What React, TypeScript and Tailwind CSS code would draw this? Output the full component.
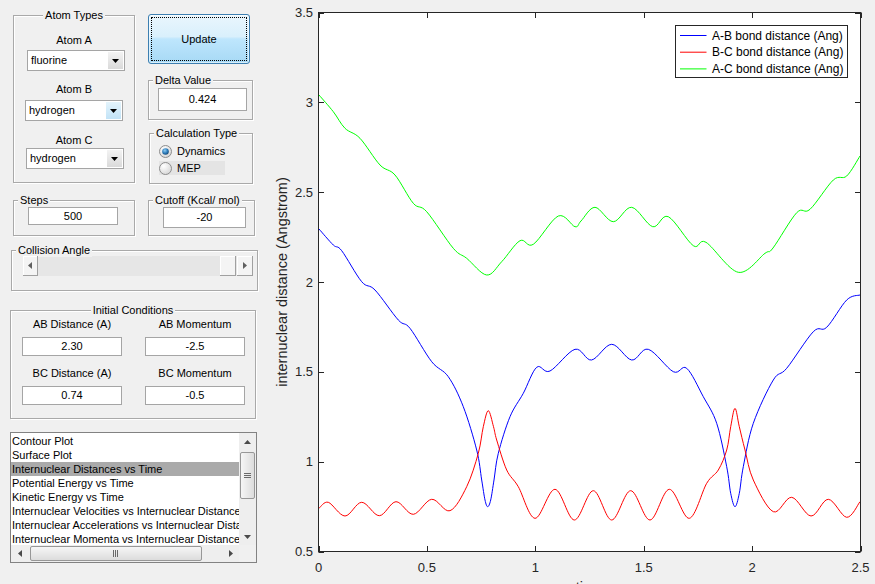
import type { ReactNode } from 'react'

// MATLAB-style GUI: control column on the left, internuclear distance plot on the right

const ETCH = 'border border-[#a9a9a9] shadow-[inset_1px_1px_0_#ffffff,1px_1px_0_#ffffff]'

type Pt = [number, number]

// plot box in page pixels
const L = 318.5
const R = 860.5
const T = 12.5
const B = 551.5
const xs = (t: number) => L + (t * (R - L)) / 2.5
const ys = (v: number) => T + ((3.5 - v) * (B - T)) / 3

const GREEN: Pt[] = [
  [319, 95], [333.3, 111.7], [345, 128.3], [360, 138.3], [380, 165], [395, 175], [413.3, 203.3],
  [426.7, 211.7], [453.3, 248.3], [466.7, 258.3], [486.7, 275], [501.7, 261.7], [520, 240.7],
  [533.3, 244.3], [558.3, 216], [575, 226.7], [581, 221], [595, 207.3], [613.3, 221.7], [631.7, 207.3],
  [652.7, 226.7], [668.3, 216.7], [693.3, 245.7], [706, 242.3], [738.3, 272.3], [765, 253.3],
  [773, 248], [796.7, 212.7], [810, 209.3], [833.3, 180], [846.7, 176], [860, 156],
]

const BLUE: Pt[] = [
  [319, 229], [333.3, 245], [341.7, 250.7], [361.7, 281.7], [375, 290], [398.3, 320], [410, 328.3],
  [431.7, 361.7], [448.3, 376.7], [463.3, 406.7], [476.7, 450], [481.7, 480], [485, 500],
  [487.7, 506.7], [490.7, 500], [494, 480], [498.3, 453.3], [510, 416.7], [523.3, 393.3],
  [536.7, 367.3], [550, 371], [575, 349.3], [591.5, 360], [611.7, 344.3], [631.7, 360],
  [648.3, 349.3], [673.3, 371.7], [686.7, 368.3], [703.3, 396.7], [716.7, 423.3], [726.7, 466.7],
  [730.7, 493.3], [735, 506.7], [739.3, 493.3], [743.3, 466.7], [753.3, 423.3], [773.3, 380],
  [786.7, 368.3], [813.3, 331.7], [826.7, 327.3], [846.7, 300], [860, 295],
]

const RED: Pt[] = [
  [319, 508.3], [328.3, 502.3], [345, 516], [361.7, 502.3], [379.3, 515.7], [396, 501.7],
  [413.3, 514.3], [431.7, 499.3], [450, 510.7], [466.7, 486.7], [478.3, 453.3], [483.3, 426.7],
  [488.3, 410.7], [493.5, 426.7], [496.7, 440], [506.7, 470], [518.3, 486.7], [535, 518.3],
  [555, 489.3], [574.3, 520], [593.3, 490.7], [611.7, 520], [630.7, 490.7], [650, 520],
  [669.3, 489.3], [689.3, 518.3], [706.7, 483.3], [718.3, 470], [726.7, 450], [730.7, 426.7],
  [735, 408.3], [739.3, 426.7], [745, 450], [753.3, 480], [773.3, 511.7], [791.7, 497.3],
  [811, 516], [828.3, 499.3], [846.7, 517.3], [860, 501.7],
]

function smooth(pts: Pt[]): string {
  let d = `M${pts[0][0]},${pts[0][1]}`
  for (let i = 0; i < pts.length - 1; i++) {
    const p0 = pts[i - 1] ?? pts[i]
    const p1 = pts[i]
    const p2 = pts[i + 1]
    const p3 = pts[i + 2] ?? p2
    const c1x = p1[0] + (p2[0] - p0[0]) / 6
    const c1y = p1[1] + (p2[1] - p0[1]) / 6
    const c2x = p2[0] - (p3[0] - p1[0]) / 6
    const c2y = p2[1] - (p3[1] - p1[1]) / 6
    d += ` C${c1x.toFixed(2)},${c1y.toFixed(2)} ${c2x.toFixed(2)},${c2y.toFixed(2)} ${p2[0]},${p2[1]}`
  }
  return d
}

function Panel({
  title,
  center,
  className,
  children,
}: {
  title: string
  center?: boolean
  className: string
  children?: ReactNode
}) {
  return (
    <div className={`${ETCH} ${className}`}>
      <div className={`-mt-[7px] flex h-[13px] ${center ? 'justify-center' : 'pl-[4px]'}`}>
        <span className="bg-[#f0f0f0] px-[2px] leading-[13px]">{title}</span>
      </div>
      {children}
    </div>
  )
}

function Edit({ value, className }: { value: string; className: string }) {
  return (
    <div className={`flex items-center justify-center border border-[#a5a5a5] bg-white ${className}`}>
      {value}
    </div>
  )
}

function Popup({ value, hot, className }: { value: string; hot?: boolean; className: string }) {
  return (
    <div className={`flex h-[21px] w-[98px] border border-[#a5a5a5] bg-white ${className}`}>
      <span className="flex-1 pl-[3px] leading-[19px]">{value}</span>
      <span
        className={`m-[1px] flex w-[15px] items-center justify-center ${
          hot
            ? 'bg-[linear-gradient(#e4f4fc,#c2e3f7)]'
            : 'bg-[linear-gradient(#f3f3f3,#dadada)]'
        }`}
      >
        <svg width="7" height="4" viewBox="0 0 7 4">
          <path d="M0 0h7L3.5 4z" fill="#000" />
        </svg>
      </span>
    </div>
  )
}

function Radio({ on }: { on?: boolean }) {
  return (
    <svg width="13" height="13" viewBox="0 0 13 13" className="shrink-0">
      <defs>
        <radialGradient id={on ? 'rOn' : 'rOff'} cx="0.35" cy="0.3" r="0.8">
          <stop offset="0" stopColor="#ffffff" />
          <stop offset="1" stopColor="#d4d4d4" />
        </radialGradient>
        <radialGradient id="rDot" cx="0.4" cy="0.35" r="0.7">
          <stop offset="0" stopColor="#8fcdf3" />
          <stop offset="0.6" stopColor="#2a79b8" />
          <stop offset="1" stopColor="#17466e" />
        </radialGradient>
      </defs>
      <circle cx="6.5" cy="6.5" r="6" fill={on ? 'url(#rOn)' : 'url(#rOff)'} stroke="#8d8d8d" />
      {on && <circle cx="6.5" cy="6.5" r="3.3" fill="url(#rDot)" />}
    </svg>
  )
}

function Tri({ dir, color = '#4a4a4a' }: { dir: 'up' | 'down' | 'left' | 'right'; color?: string }) {
  const d = {
    up: 'M0 4h7L3.5 0z',
    down: 'M0 0h7L3.5 4z',
    left: 'M4 0v7L0 3.5z',
    right: 'M0 0v7L4 3.5z',
  }[dir]
  const vertical = dir === 'up' || dir === 'down'
  return (
    <svg width={vertical ? 7 : 4} height={vertical ? 4 : 7} viewBox={vertical ? '0 0 7 4' : '0 0 4 7'}>
      <path d={d} fill={color} />
    </svg>
  )
}

function Slider() {
  const btn = 'flex items-center justify-center bg-[#f4f4f4] border-r border-b border-[#a0a0a0] shadow-[inset_1px_1px_0_#ffffff]'
  return (
    <div className="-mt-[1px] ml-[11px] flex h-[20px] w-[230px] bg-[#e6e6e6]">
      <div className={`w-[15px] ${btn}`}>
        <Tri dir="left" color="#606060" />
      </div>
      <div className="flex-1" />
      <div className={`w-[16px] ${btn}`} />
      <div className={`ml-[1px] w-[16px] ${btn}`}>
        <Tri dir="right" color="#606060" />
      </div>
    </div>
  )
}

const PLOTS = [
  'Contour Plot',
  'Surface Plot',
  'Internuclear Distances vs Time',
  'Potential Energy vs Time',
  'Kinetic Energy vs Time',
  'Internuclear Velocities vs Internuclear Distance',
  'Internuclear Accelerations vs Internuclear Distance',
  'Internuclear Momenta vs Internuclear Distance',
]

function ListBox() {
  const thumb = 'rounded-[2px] border border-[#979797] flex items-center justify-center'
  return (
    <div className="ml-[10px] mt-[13px] flex h-[131px] w-[247px] flex-col border border-[#828282] bg-white">
      <div className="flex min-h-0 flex-1">
        <div className="min-w-0 flex-1 overflow-hidden pt-[1px]">
          {PLOTS.map((p, i) => (
            <div
              key={p}
              className={`h-[14px] whitespace-nowrap pl-[1px] leading-[14px] ${i === 2 ? 'bg-[#aaaaaa]' : ''}`}
            >
              {p}
            </div>
          ))}
        </div>
        <div className="flex w-[17px] flex-col bg-[#eeeeee]">
          <div className="flex h-[17px] items-center justify-center">
            <Tri dir="up" />
          </div>
          <div className={`mx-[1px] mt-[2px] h-[47px] bg-[linear-gradient(90deg,#f6f6f6,#dcdcdc)] ${thumb}`}>
            <svg width="7" height="6" viewBox="0 0 7 6">
              <path d="M0 0.5h7M0 2.5h7M0 4.5h7" stroke="#6a6a6a" />
            </svg>
          </div>
          <div className="flex-1" />
          <div className="flex h-[17px] items-center justify-center">
            <Tri dir="down" />
          </div>
        </div>
      </div>
      <div className="flex h-[17px] bg-[#eeeeee]">
        <div className="flex w-[17px] items-center justify-center">
          <Tri dir="left" />
        </div>
        <div className={`my-[1px] ml-[2px] w-[172px] bg-[linear-gradient(#f6f6f6,#dcdcdc)] ${thumb}`}>
          <svg width="6" height="7" viewBox="0 0 6 7">
            <path d="M0.5 0v7M2.5 0v7M4.5 0v7" stroke="#6a6a6a" />
          </svg>
        </div>
        <div className="flex-1" />
        <div className="flex w-[17px] items-center justify-center">
          <Tri dir="right" />
        </div>
        <div className="w-[17px] bg-[#f0f0f0]" />
      </div>
    </div>
  )
}

function Chart() {
  const xt = [0, 0.5, 1, 1.5, 2, 2.5]
  const yt = [0.5, 1, 1.5, 2, 2.5, 3, 3.5]
  const ink = '#262626'
  const legend: [string, string][] = [
    ['#0000ff', 'A-B bond distance (Ang)'],
    ['#ff0000', 'B-C bond distance (Ang)'],
    ['#00ff00', 'A-C bond distance (Ang)'],
  ]
  return (
    <svg width="613" height="584" viewBox="262 0 613 584" fontFamily="'Liberation Sans', Arial, sans-serif">
      <rect x={L} y={T} width={R - L} height={B - T} fill="#fff" />
      <path d={smooth(BLUE)} fill="none" stroke="#0000ff" strokeWidth="1" />
      <path d={smooth(RED)} fill="none" stroke="#ff0000" strokeWidth="1" />
      <path d={smooth(GREEN)} fill="none" stroke="#00ff00" strokeWidth="1" />
      <rect x={L} y={T} width={R - L} height={B - T} fill="none" stroke={ink} strokeWidth="1" />
      {xt.map((t) => (
        <g key={t}>
          <path d={`M${Math.round(xs(t)) + 0.5} ${B}v-5.5M${Math.round(xs(t)) + 0.5} ${T}v5.5`} stroke={ink} />
          <text x={xs(t)} y="572" fontSize="13" fill={ink} textAnchor="middle">
            {t}
          </text>
        </g>
      ))}
      {yt.map((v) => (
        <g key={v}>
          <path d={`M${L} ${Math.round(ys(v)) + 0.5}h5.5M${R} ${Math.round(ys(v)) + 0.5}h-5.5`} stroke={ink} />
          <text x="313" y={ys(v) + 4.5} fontSize="13" fill={ink} textAnchor="end">
            {v}
          </text>
        </g>
      ))}
      <text transform="translate(287 282) rotate(-90)" fontSize="14.5" fill={ink} textAnchor="middle">
        internuclear distance (Angstrom)
      </text>
      <text x="589.5" y="592" fontSize="14.5" fill={ink} textAnchor="middle">
        time
      </text>
      <rect x="675.5" y="25.5" width="172" height="52" fill="#fff" stroke={ink} />
      {legend.map(([c, label], i) => (
        <g key={label}>
          <path d={`M680 ${35.5 + i * 16.7}h26.5`} stroke={c} />
          <text x="712" y={39.7 + i * 16.7} fontSize="12" fill="#000">
            {label}
          </text>
        </g>
      ))}
    </svg>
  )
}

export default function App() {
  return (
    <div className="flex h-[584px] w-[875px] overflow-hidden bg-[#f0f0f0] font-['Liberation_Sans',Arial,sans-serif] text-[11px] text-black">
      <div className="flex w-[262px] shrink-0 flex-col">
        <div className="mt-[14px] flex items-start">
          <Panel title="Atom Types" center className="ml-[13px] mt-[1px] h-[168px] w-[122px]">
            <div className="mt-[12px] text-center leading-[13px]">Atom A</div>
            <Popup value="fluorine" className="ml-[13px] mt-[3px]" />
            <div className="mt-[12px] text-center leading-[13px]">Atom B</div>
            <Popup value="hydrogen" hot className="ml-[11px] mt-[4px]" />
            <div className="mt-[13px] text-center leading-[13px]">Atom C</div>
            <Popup value="hydrogen" className="ml-[12px] mt-[1px]" />
          </Panel>
          <div className="ml-[13px] flex w-[106px] flex-col">
            <div className="flex h-[50px] w-[102px] rounded-[3px] border border-[#3c7fb1] bg-[linear-gradient(#eaf6fd_0%,#d9f0fc_45%,#bee6fd_50%,#a7d9f5_100%)] shadow-[inset_0_0_0_1px_rgba(255,255,255,0.55)]">
              <div className="m-[2px] flex flex-1 items-center justify-center border border-dotted border-black">
                Update
              </div>
            </div>
            <Panel title="Delta Value" className="mt-[16px] h-[40px] w-[105px]">
              <Edit value="0.424" className="ml-[9px] mt-[1px] h-[23px] w-[89px]" />
            </Panel>
            <Panel title="Calculation Type" className="ml-[1px] mt-[13px] h-[51px] w-[104px]">
              <div className="ml-[9px] mt-[4px] flex h-[14px] w-[66px] items-center gap-[5px]">
                <Radio on />
                <span>Dynamics</span>
              </div>
              <div className="ml-[9px] mt-[3px] flex h-[14px] w-[66px] items-center gap-[5px] bg-[#e4e4e4]">
                <Radio />
                <span>MEP</span>
              </div>
            </Panel>
          </div>
        </div>

        <div className="mt-[16px] flex">
          <Panel title="Steps" className="ml-[13px] h-[36px] w-[122px]">
            <Edit value="500" className="ml-[14px] h-[18px] w-[90px]" />
          </Panel>
          <Panel title="Cutoff (Kcal/ mol)" className="ml-[13px] h-[36px] w-[107px]">
            <Edit value="-20" className="ml-[14px] h-[21px] w-[83px]" />
          </Panel>
        </div>

        <Panel title="Collision Angle" className="ml-[11px] mt-[14px] h-[41px] w-[247px]">
          <Slider />
        </Panel>

        <Panel title="Initial Conditions" center className="ml-[10px] mt-[19px] h-[109px] w-[246px]">
          <div className="ml-[11px] grid grid-cols-[100px_100px] gap-x-[23px]">
            <div className="mt-[1px] text-center leading-[13px]">AB Distance (A)</div>
            <div className="mt-[1px] text-center leading-[13px]">AB Momentum</div>
            <Edit value="2.30" className="mt-[6px] h-[19px]" />
            <Edit value="-2.5" className="mt-[6px] h-[19px]" />
            <div className="mt-[11px] text-center leading-[13px]">BC Distance (A)</div>
            <div className="mt-[11px] text-center leading-[13px]">BC Momentum</div>
            <Edit value="0.74" className="mt-[6px] h-[19px]" />
            <Edit value="-0.5" className="mt-[6px] h-[19px]" />
          </div>
        </Panel>

        <ListBox />
      </div>
      <div className="flex-1">
        <Chart />
      </div>
    </div>
  )
}
